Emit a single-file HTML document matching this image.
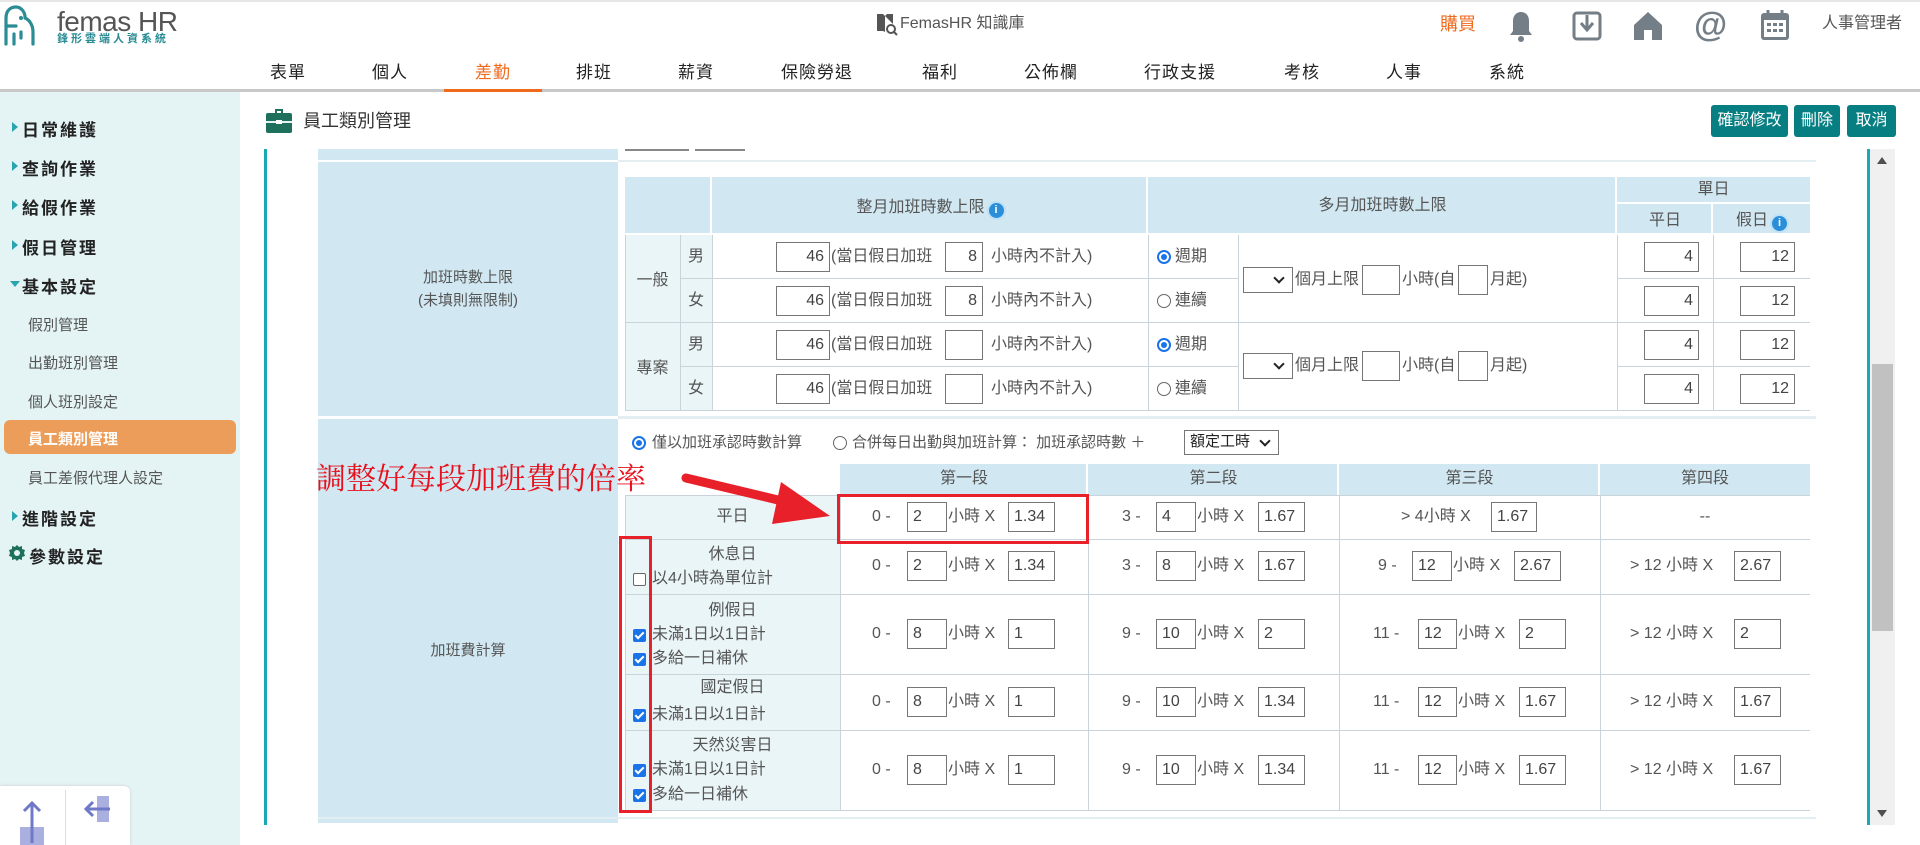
<!DOCTYPE html>
<html><head><meta charset="utf-8"><style>
*{margin:0;padding:0;box-sizing:border-box}
body{width:1920px;height:845px;position:relative;overflow:hidden;background:#fff;font-family:"Liberation Sans","Noto Sans CJK TC",sans-serif;color:#555}
.a{position:absolute}
.t{position:absolute;font-size:16px;white-space:nowrap;color:#555;line-height:20px}
.c{text-align:center}
.i{position:absolute;border:1px solid #767676;background:#fff;height:30px;font-size:16px;line-height:28px;padding:0 5px;color:#444}
.r{text-align:right}
.hd{position:absolute;background:#d1e8f2;border-right:2px solid #fff;border-bottom:2px solid #fff}
.hl{position:absolute;height:1px;background:#c9d3da}
.vl{position:absolute;width:1px;background:#c9d3da}
.nav{position:absolute;top:58px;font-size:17px;color:#222;letter-spacing:1px}
.sm{position:absolute;left:22px;font-size:17px;font-weight:bold;color:#222;letter-spacing:2px}
.sm.ar:before{content:"";position:absolute;left:-10px;top:6px;border-left:6px solid #2aa5b0;border-top:5px solid transparent;border-bottom:5px solid transparent}
.ss{position:absolute;left:28px;font-size:15px;color:#555}
.cb{position:absolute;width:13px;height:13px;border-radius:2px;background:#1a73e8}
.cb:after{content:"";position:absolute;left:4px;top:1px;width:3px;height:7px;border:solid #fff;border-width:0 2px 2px 0;transform:rotate(45deg)}
.rd{position:absolute;width:14px;height:14px;border-radius:50%;border:1px solid #666;background:#fff}
.rd.on{border:2px solid #1a73e8}
.rd.on:after{content:"";position:absolute;left:2px;top:2px;width:6px;height:6px;border-radius:50%;background:#1a73e8}
.sel{position:absolute;border:1px solid #767676;background:#fff;height:26px}
.sel:after{content:"";position:absolute;right:9px;top:6px;width:6px;height:6px;border:solid #222;border-width:0 2px 2px 0;transform:rotate(45deg)}
.btn{position:absolute;top:105px;height:32px;background:#077f82;color:#fff;font-size:16px;line-height:32px;text-align:center;border-radius:3px}
.info{display:inline-block;width:15px;height:15px;border-radius:50%;background:#2a8fd8;color:#fff;font-size:11px;line-height:15px;text-align:center;font-weight:bold;vertical-align:-1px;margin-left:4px;box-shadow:0 0 0 2px #bfe0f5}
</style></head><body>

<div class="a" style="left:0;top:0;width:1920px;height:2px;background:#e6e6e6"></div>
<svg class="a" style="left:2px;top:4px" width="34" height="42" viewBox="0 0 34 42"><path d="M4 40V14c0-8 5-11 10-11s9 5 9 10M4 22h10M23 14c5 2 8 8 8 14v12M12 30v10M19 28v6" fill="none" stroke="#2a8c94" stroke-width="3.2" stroke-linecap="round"/><circle cx="19" cy="14" r="2" fill="#2a8c94"/></svg>
<div class="t" style="left:57px;top:6px;font-size:28px;line-height:32px;color:#555;letter-spacing:-0.5px">femas HR</div>
<div class="t" style="left:57px;top:33px;font-size:11px;line-height:13px;color:#2a8c94;font-weight:bold;letter-spacing:3px">鋒形雲端人資系統</div>

<svg class="a" style="left:876px;top:12px" width="22" height="24" viewBox="0 0 22 24"><path d="M1 2h6l2 2v16l-2-1H1zM9 4l2-2h6v10" fill="#555"/><circle cx="15" cy="17" r="4" fill="none" stroke="#555" stroke-width="2"/><path d="M18 20l3 3" stroke="#555" stroke-width="2"/></svg>
<div class="t" style="left:900px;top:14px;font-size:16px;color:#555">FemasHR 知識庫</div>
<div class="t" style="left:1440px;top:14px;font-size:18px;color:#f06a1c">購買</div>
<svg class="a" style="left:1510px;top:11px" width="22" height="32" viewBox="0 0 22 32"><path d="M11 1c-5 0-8 4-8 9v10l-3 4h22l-3-4V10c0-5-3-9-8-9z" fill="#747e87"/><circle cx="11" cy="28" r="3" fill="#747e87"/></svg>
<svg class="a" style="left:1572px;top:11px" width="30" height="30" viewBox="0 0 30 30"><rect x="2" y="2" width="26" height="26" rx="3" fill="none" stroke="#747e87" stroke-width="3"/><path d="M15 4v14M9 12l6 7 6-7" fill="none" stroke="#747e87" stroke-width="3"/></svg>
<svg class="a" style="left:1633px;top:11px" width="30" height="30" viewBox="0 0 30 30"><path d="M15 1L1 14v15h10v-10h8v10h10V14z" fill="#747e87"/></svg>
<div class="t" style="left:1694px;top:6px;font-size:34px;line-height:38px;color:#747e87;font-weight:bold">@</div>
<svg class="a" style="left:1760px;top:9px" width="30" height="32" viewBox="0 0 30 32"><rect x="1" y="4" width="28" height="27" rx="3" fill="#747e87"/><rect x="4" y="11" width="22" height="17" fill="#fff"/><path d="M8 1v6M22 1v6" stroke="#747e87" stroke-width="3"/><g fill="#747e87"><rect x="7" y="14" width="4" height="3"/><rect x="13" y="14" width="4" height="3"/><rect x="19" y="14" width="4" height="3"/><rect x="7" y="20" width="4" height="3"/><rect x="13" y="20" width="4" height="3"/><rect x="19" y="20" width="4" height="3"/></g></svg>
<div class="t" style="left:1822px;top:14px;font-size:16px;color:#555">人事管理者</div>

<div class="nav" style="left:270px">表單</div>
<div class="nav" style="left:372px">個人</div>
<div class="nav" style="left:475px;color:#f06a1c">差勤</div>
<div class="nav" style="left:576px">排班</div>
<div class="nav" style="left:678px">薪資</div>
<div class="nav" style="left:781px">保險勞退</div>
<div class="nav" style="left:922px">福利</div>
<div class="nav" style="left:1024px">公佈欄</div>
<div class="nav" style="left:1144px">行政支援</div>
<div class="nav" style="left:1284px">考核</div>
<div class="nav" style="left:1386px">人事</div>
<div class="nav" style="left:1489px">系統</div>
<div class="a" style="left:0;top:89px;width:1920px;height:3px;background:#c8c8c8"></div>
<div class="a" style="left:444px;top:89px;width:98px;height:3px;background:#f06a1c"></div>

<div class="a" style="left:0;top:92px;width:240px;height:753px;background:#e4f4f5"></div>
<div class="sm ar" style="top:116px">日常維護</div>
<div class="sm ar" style="top:155px">查詢作業</div>
<div class="sm ar" style="top:194px">給假作業</div>
<div class="sm ar" style="top:234px">假日管理</div>
<div class="sm" style="top:273px">基本設定</div>
<div class="a" style="left:10px;top:281px;border-top:6px solid #2aa5b0;border-left:5px solid transparent;border-right:5px solid transparent"></div>
<div class="ss" style="top:314px">假別管理</div>
<div class="ss" style="top:352px">出勤班別管理</div>
<div class="ss" style="top:391px">個人班別設定</div>
<div class="a" style="left:4px;top:420px;width:232px;height:34px;background:#ec9d5a;border-radius:6px"></div>
<div class="ss" style="top:428px;color:#fff;font-weight:bold">員工類別管理</div>
<div class="ss" style="top:467px">員工差假代理人設定</div>
<div class="sm ar" style="top:505px">進階設定</div>
<svg class="a" style="left:8px;top:544px" width="18" height="18" viewBox="0 0 18 18"><path d="M9 1l2 2 3-1 0 3 3 1-1 3 1 3-3 1 0 3-3-1-2 2-2-2-3 1 0-3-3-1 1-3-1-3 3-1 0-3 3 1z" fill="#1e6f5c"/><circle cx="9" cy="9" r="3" fill="#e4f4f5"/></svg>
<div class="a" style="left:29px;top:543px;font-size:17px;font-weight:bold;color:#222;letter-spacing:2px">參數設定</div>
<div class="a" style="left:0;top:786px;width:130px;height:59px;background:#fff;border-radius:0 6px 0 0;box-shadow:0 0 3px #ccc"></div>
<div class="a" style="left:65px;top:790px;width:1px;height:55px;background:#ddd"></div>
<svg class="a" style="left:18px;top:795px" width="30" height="50" viewBox="0 0 30 50"><rect x="2" y="32" width="24" height="18" fill="#a9b0e0"/><path d="M14 48V8M6 16l8-8 8 8" fill="none" stroke="#6f79c8" stroke-width="3"/></svg>
<svg class="a" style="left:82px;top:795px" width="30" height="40" viewBox="0 0 30 40"><rect x="15" y="1" width="12" height="26" fill="#a9b0e0"/><path d="M28 14H4M11 7l-7 7 7 7" fill="none" stroke="#6f79c8" stroke-width="3"/></svg>

<svg class="a" style="left:266px;top:108px" width="26" height="25" viewBox="0 0 26 25"><path d="M9 1h8v4h-2V3h-4v2H9z" fill="#1e6f5c"/><rect x="0" y="5" width="26" height="20" rx="2" fill="#1e6f5c"/><rect x="0" y="13" width="26" height="2" fill="#e4f4f5"/><rect x="10" y="12" width="6" height="4" fill="#fff"/></svg>
<div class="t" style="left:303px;top:110px;font-size:18px;line-height:22px;color:#333">員工類別管理</div>
<div class="btn" style="left:1711px;width:77px">確認修改</div>
<div class="btn" style="left:1794px;width:46px">刪除</div>
<div class="btn" style="left:1847px;width:49px">取消</div>

<div class="a" style="left:264px;top:149px;width:3px;height:676px;background:#1aa9b4"></div>
<div class="a" style="left:1867px;top:149px;width:3px;height:676px;background:#1aa9b4"></div>
<div class="a" style="left:1870px;top:149px;width:25px;height:676px;background:#f0f0f0"></div>
<div class="a" style="left:1872px;top:364px;width:21px;height:267px;background:#c1c1c1"></div>
<div class="a" style="left:1877px;top:157px;border-bottom:7px solid #505050;border-left:5px solid transparent;border-right:5px solid transparent"></div>
<div class="a" style="left:1877px;top:810px;border-top:7px solid #505050;border-left:5px solid transparent;border-right:5px solid transparent"></div>

<div class="a" style="left:318px;top:149px;width:300px;height:674px;background:#d1e8f2"></div>
<div class="a" style="left:318px;top:160px;width:1498px;height:2px;background:#e3eef2"></div>
<div class="a" style="left:318px;top:160px;width:300px;height:2px;background:#fff"></div>
<div class="a" style="left:318px;top:416px;width:1498px;height:3px;background:#e3eef2"></div>
<div class="a" style="left:318px;top:416px;width:300px;height:3px;background:#fff"></div>
<div class="a" style="left:318px;top:817px;width:1498px;height:2px;background:#e3eef2"></div>
<div class="a" style="left:625px;top:149px;width:64px;height:2px;background:#888"></div>
<div class="a" style="left:695px;top:149px;width:50px;height:2px;background:#888"></div>
<div class="t c" style="left:318px;top:268px;width:300px;font-size:15px">加班時數上限</div>
<div class="t c" style="left:318px;top:291px;width:300px;font-size:15px">(未填則無限制)</div>
<div class="t c" style="left:318px;top:641px;width:300px;font-size:15px">加班費計算</div>

<div class="hd" style="left:625px;top:177px;width:87px;height:58px"></div>
<div class="hd" style="left:712px;top:177px;width:436px;height:58px"></div>
<div class="hd" style="left:1148px;top:177px;width:469px;height:58px"></div>
<div class="hd" style="left:1617px;top:177px;width:193px;height:27px;border-right:0"></div>
<div class="hd" style="left:1617px;top:204px;width:96px;height:31px"></div>
<div class="hd" style="left:1713px;top:204px;width:97px;height:31px;border-right:0"></div>
<div class="t c" style="left:712px;top:198px;width:436px">整月加班時數上限<span class="info">i</span></div>
<div class="t c" style="left:1148px;top:196px;width:469px">多月加班時數上限</div>
<div class="t c" style="left:1617px;top:180px;width:193px">單日</div>
<div class="t c" style="left:1617px;top:211px;width:96px">平日</div>
<div class="t c" style="left:1713px;top:211px;width:97px">假日<span class="info">i</span></div>

<div class="a" style="left:625px;top:235px;width:87px;height:175px;background:#eaf5f8"></div>
<div class="hl" style="left:625px;top:410px;width:1185px"></div>
<div class="hl" style="left:625px;top:322px;width:1185px"></div>
<div class="hl" style="left:680px;top:278px;width:558px"></div>
<div class="hl" style="left:680px;top:366px;width:558px"></div>
<div class="hl" style="left:1617px;top:278px;width:193px"></div>
<div class="hl" style="left:1617px;top:366px;width:193px"></div>
<div class="vl" style="left:625px;top:235px;height:176px"></div>
<div class="vl" style="left:680px;top:235px;height:176px"></div>
<div class="vl" style="left:712px;top:235px;height:176px"></div>
<div class="vl" style="left:1148px;top:235px;height:176px"></div>
<div class="vl" style="left:1238px;top:235px;height:176px"></div>
<div class="vl" style="left:1617px;top:235px;height:176px"></div>
<div class="vl" style="left:1713px;top:235px;height:176px"></div>
<div class="t c" style="left:625px;top:271px;width:55px">一般</div>
<div class="t c" style="left:625px;top:359px;width:55px">專案</div>

<div class="t c" style="left:680px;top:247px;width:32px">男</div>
<div class="t c" style="left:680px;top:291px;width:32px">女</div>
<div class="t c" style="left:680px;top:335px;width:32px">男</div>
<div class="t c" style="left:680px;top:379px;width:32px">女</div>

<div class="i r" style="left:776px;top:242px;width:54px">46</div><div class="t" style="left:831px;top:247px">(當日假日加班</div><div class="i r" style="left:945px;top:242px;width:38px">8</div><div class="t" style="left:991px;top:247px">小時內不計入)</div>
<div class="i r" style="left:776px;top:286px;width:54px">46</div><div class="t" style="left:831px;top:291px">(當日假日加班</div><div class="i r" style="left:945px;top:286px;width:38px">8</div><div class="t" style="left:991px;top:291px">小時內不計入)</div>
<div class="i r" style="left:776px;top:330px;width:54px">46</div><div class="t" style="left:831px;top:335px">(當日假日加班</div><div class="i r" style="left:945px;top:330px;width:38px"></div><div class="t" style="left:991px;top:335px">小時內不計入)</div>
<div class="i r" style="left:776px;top:374px;width:54px">46</div><div class="t" style="left:831px;top:379px">(當日假日加班</div><div class="i r" style="left:945px;top:374px;width:38px"></div><div class="t" style="left:991px;top:379px">小時內不計入)</div>

<div class="rd on" style="left:1157px;top:250px"></div><div class="t" style="left:1175px;top:247px">週期</div>
<div class="rd" style="left:1157px;top:294px"></div><div class="t" style="left:1175px;top:291px">連續</div>
<div class="rd on" style="left:1157px;top:338px"></div><div class="t" style="left:1175px;top:335px">週期</div>
<div class="rd" style="left:1157px;top:382px"></div><div class="t" style="left:1175px;top:379px">連續</div>

<div class="sel" style="left:1243px;top:267px;width:50px"></div><div class="t" style="left:1295px;top:270px">個月上限</div><div class="i" style="left:1362px;top:265px;width:38px"></div><div class="t" style="left:1402px;top:270px">小時(自</div><div class="i" style="left:1458px;top:265px;width:30px"></div><div class="t" style="left:1490px;top:270px">月起)</div>
<div class="sel" style="left:1243px;top:353px;width:50px"></div><div class="t" style="left:1295px;top:356px">個月上限</div><div class="i" style="left:1362px;top:351px;width:38px"></div><div class="t" style="left:1402px;top:356px">小時(自</div><div class="i" style="left:1458px;top:351px;width:30px"></div><div class="t" style="left:1490px;top:356px">月起)</div>

<div class="i r" style="left:1644px;top:242px;width:55px">4</div><div class="i r" style="left:1740px;top:242px;width:55px">12</div>
<div class="i r" style="left:1644px;top:286px;width:55px">4</div><div class="i r" style="left:1740px;top:286px;width:55px">12</div>
<div class="i r" style="left:1644px;top:330px;width:55px">4</div><div class="i r" style="left:1740px;top:330px;width:55px">12</div>
<div class="i r" style="left:1644px;top:374px;width:55px">4</div><div class="i r" style="left:1740px;top:374px;width:55px">12</div>

<div class="rd on" style="left:632px;top:436px"></div><div class="t" style="left:652px;top:433px;font-size:15px">僅以加班承認時數計算</div>
<div class="rd" style="left:833px;top:436px"></div><div class="t" style="left:852px;top:433px;font-size:15px">合併每日出勤與加班計算： 加班承認時數 ＋</div>
<div class="sel" style="left:1184px;top:430px;width:95px;height:25px"></div><div class="t" style="left:1190px;top:432px;font-size:15px;color:#222">額定工時</div>

<div class="hd" style="left:840px;top:464px;width:248px;height:31px;border-bottom:0"></div>
<div class="hd" style="left:1088px;top:464px;width:251px;height:31px;border-bottom:0"></div>
<div class="hd" style="left:1339px;top:464px;width:261px;height:31px;border-bottom:0"></div>
<div class="hd" style="left:1600px;top:464px;width:210px;height:31px;border-bottom:0;border-right:0"></div>
<div class="t c" style="left:840px;top:469px;width:248px">第一段</div>
<div class="t c" style="left:1088px;top:469px;width:251px">第二段</div>
<div class="t c" style="left:1339px;top:469px;width:261px">第三段</div>
<div class="t c" style="left:1600px;top:469px;width:210px">第四段</div>

<div class="a" style="left:625px;top:495px;width:215px;height:315px;background:#eaf5f8"></div>
<div class="hl" style="left:625px;top:495px;width:1185px"></div>
<div class="hl" style="left:625px;top:539px;width:1185px"></div>
<div class="hl" style="left:625px;top:594px;width:1185px"></div>
<div class="hl" style="left:625px;top:674px;width:1185px"></div>
<div class="hl" style="left:625px;top:730px;width:1185px"></div>
<div class="hl" style="left:625px;top:810px;width:1185px"></div>
<div class="vl" style="left:625px;top:495px;height:316px"></div>
<div class="vl" style="left:840px;top:495px;height:316px"></div>
<div class="vl" style="left:1088px;top:495px;height:316px"></div>
<div class="vl" style="left:1339px;top:495px;height:316px"></div>
<div class="vl" style="left:1600px;top:495px;height:316px"></div>

<div class="t c" style="left:625px;top:507px;width:215px">平日</div>
<div class="t c" style="left:625px;top:545px;width:215px">休息日</div>
<div class="a" style="left:633px;top:573px;width:13px;height:13px;border:1px solid #666;border-radius:2px;background:#fff"></div><div class="t" style="left:652px;top:569px">以4小時為單位計</div>
<div class="t c" style="left:625px;top:601px;width:215px">例假日</div>
<div class="cb" style="left:633px;top:629px"></div><div class="t" style="left:652px;top:625px">未滿1日以1日計</div>
<div class="cb" style="left:633px;top:653px"></div><div class="t" style="left:652px;top:649px">多給一日補休</div>
<div class="t c" style="left:625px;top:678px;width:215px">國定假日</div>
<div class="cb" style="left:633px;top:709px"></div><div class="t" style="left:652px;top:705px">未滿1日以1日計</div>
<div class="t c" style="left:625px;top:736px;width:215px">天然災害日</div>
<div class="cb" style="left:633px;top:764px"></div><div class="t" style="left:652px;top:760px">未滿1日以1日計</div>
<div class="cb" style="left:633px;top:789px"></div><div class="t" style="left:652px;top:785px">多給一日補休</div>

<div class="t" style="left:872px;top:507px">0 -</div><div class="i" style="left:907px;top:502px;width:40px">2</div><div class="t" style="left:948px;top:507px">小時 X</div><div class="i" style="left:1008px;top:502px;width:47px">1.34</div>
<div class="t" style="left:1122px;top:507px">3 -</div><div class="i" style="left:1156px;top:502px;width:40px">4</div><div class="t" style="left:1197px;top:507px">小時 X</div><div class="i" style="left:1258px;top:502px;width:47px">1.67</div>
<div class="t" style="left:1401px;top:507px">&gt; 4小時 X</div><div class="i" style="left:1491px;top:502px;width:46px">1.67</div>
<div class="t c" style="left:1600px;top:507px;width:210px">--</div>
<div class="t" style="left:872px;top:556px">0 -</div><div class="i" style="left:907px;top:551px;width:40px">2</div><div class="t" style="left:948px;top:556px">小時 X</div><div class="i" style="left:1008px;top:551px;width:47px">1.34</div>
<div class="t" style="left:1122px;top:556px">3 -</div><div class="i" style="left:1156px;top:551px;width:40px">8</div><div class="t" style="left:1197px;top:556px">小時 X</div><div class="i" style="left:1258px;top:551px;width:47px">1.67</div>
<div class="t" style="left:1378px;top:556px">9 -</div><div class="i" style="left:1412px;top:551px;width:40px">12</div><div class="t" style="left:1453px;top:556px">小時 X</div><div class="i" style="left:1514px;top:551px;width:47px">2.67</div>
<div class="t" style="left:1630px;top:556px">&gt; 12 小時 X</div><div class="i" style="left:1734px;top:551px;width:47px">2.67</div>
<div class="t" style="left:872px;top:624px">0 -</div><div class="i" style="left:907px;top:619px;width:40px">8</div><div class="t" style="left:948px;top:624px">小時 X</div><div class="i" style="left:1008px;top:619px;width:47px">1</div>
<div class="t" style="left:1122px;top:624px">9 -</div><div class="i" style="left:1156px;top:619px;width:40px">10</div><div class="t" style="left:1197px;top:624px">小時 X</div><div class="i" style="left:1258px;top:619px;width:47px">2</div>
<div class="t" style="left:1373px;top:624px">11 -</div><div class="i" style="left:1418px;top:619px;width:39px">12</div><div class="t" style="left:1458px;top:624px">小時 X</div><div class="i" style="left:1519px;top:619px;width:47px">2</div>
<div class="t" style="left:1630px;top:624px">&gt; 12 小時 X</div><div class="i" style="left:1734px;top:619px;width:47px">2</div>
<div class="t" style="left:872px;top:692px">0 -</div><div class="i" style="left:907px;top:687px;width:40px">8</div><div class="t" style="left:948px;top:692px">小時 X</div><div class="i" style="left:1008px;top:687px;width:47px">1</div>
<div class="t" style="left:1122px;top:692px">9 -</div><div class="i" style="left:1156px;top:687px;width:40px">10</div><div class="t" style="left:1197px;top:692px">小時 X</div><div class="i" style="left:1258px;top:687px;width:47px">1.34</div>
<div class="t" style="left:1373px;top:692px">11 -</div><div class="i" style="left:1418px;top:687px;width:39px">12</div><div class="t" style="left:1458px;top:692px">小時 X</div><div class="i" style="left:1519px;top:687px;width:47px">1.67</div>
<div class="t" style="left:1630px;top:692px">&gt; 12 小時 X</div><div class="i" style="left:1734px;top:687px;width:47px">1.67</div>
<div class="t" style="left:872px;top:760px">0 -</div><div class="i" style="left:907px;top:755px;width:40px">8</div><div class="t" style="left:948px;top:760px">小時 X</div><div class="i" style="left:1008px;top:755px;width:47px">1</div>
<div class="t" style="left:1122px;top:760px">9 -</div><div class="i" style="left:1156px;top:755px;width:40px">10</div><div class="t" style="left:1197px;top:760px">小時 X</div><div class="i" style="left:1258px;top:755px;width:47px">1.34</div>
<div class="t" style="left:1373px;top:760px">11 -</div><div class="i" style="left:1418px;top:755px;width:39px">12</div><div class="t" style="left:1458px;top:760px">小時 X</div><div class="i" style="left:1519px;top:755px;width:47px">1.67</div>
<div class="t" style="left:1630px;top:760px">&gt; 12 小時 X</div><div class="i" style="left:1734px;top:755px;width:47px">1.67</div>

<div class="t" style="left:316px;top:462px;font-size:30px;line-height:36px;color:#e8101c;font-family:'Liberation Serif','Noto Serif CJK SC',serif">調整好每段加班費的倍率</div>
<svg class="a" style="left:600px;top:460px" width="250" height="80" viewBox="0 0 250 80"><path d="M86 18L178 40" stroke="#e8202a" stroke-width="9" stroke-linecap="round"/><path d="M181 22L230 56L172 64z" fill="#e8202a"/></svg>
<div class="a" style="left:837px;top:494px;width:252px;height:50px;border:3px solid #e8202a"></div>
<div class="a" style="left:619px;top:536px;width:33px;height:277px;border:3px solid #e8202a"></div>
</body></html>
